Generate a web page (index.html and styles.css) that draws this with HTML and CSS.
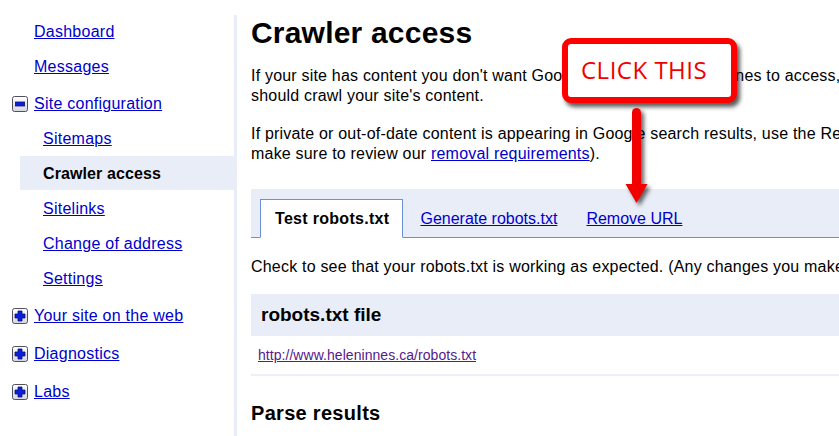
FILE: index.html
```html
<!DOCTYPE html>
<html lang="en">
<head>
<meta charset="utf-8">
<title>Crawler access</title>
<link rel="stylesheet" href="styles.css">
</head>
<body>
<div class="page">
  <nav class="sidebar">
    <ul class="nav">
      <li class="nav-item"><a href="#">Dashboard</a></li>
      <li class="nav-item"><a href="#">Messages</a></li>
      <li class="nav-item nav-parent">
        <svg class="toggle" viewBox="0 0 16 16" width="16" height="16" aria-hidden="true">
          <defs><linearGradient id="g1" x1="0" y1="0" x2="0" y2="1"><stop offset="0" stop-color="#ffffff"/><stop offset="1" stop-color="#d4d6e0"/></linearGradient></defs>
          <rect x="0.5" y="0.5" width="15" height="15" rx="2" fill="url(#g1)" stroke="#50505e"/>
          <rect x="3.4" y="6" width="9.2" height="4" fill="#0a1ee0" stroke="#101070" stroke-width="0.8"/>
        </svg>
        <a href="#">Site configuration</a>
      </li>
      <li>
        <ul class="subnav">
          <li class="nav-item"><a href="#">Sitemaps</a></li>
          <li class="nav-item active">Crawler access</li>
          <li class="nav-item"><a href="#">Sitelinks</a></li>
          <li class="nav-item"><a href="#">Change of address</a></li>
          <li class="nav-item"><a href="#">Settings</a></li>
        </ul>
      </li>
      <li class="nav-item nav-parent collapsed">
        <svg class="toggle" viewBox="0 0 16 16" width="16" height="16" aria-hidden="true">
          <defs><linearGradient id="g2" x1="0" y1="0" x2="0" y2="1"><stop offset="0" stop-color="#ffffff"/><stop offset="1" stop-color="#d4d6e0"/></linearGradient></defs>
          <rect x="0.5" y="0.5" width="15" height="15" rx="2" fill="url(#g2)" stroke="#50505e"/>
          <path d="M6 3h4v3h3v4h-3v3h-4v-3h-3v-4h3z" fill="#0a1ee0" stroke="#101070" stroke-width="0.8"/>
        </svg>
        <a href="#">Your site on the web</a>
      </li>
      <li class="nav-item nav-parent collapsed">
        <svg class="toggle" viewBox="0 0 16 16" width="16" height="16" aria-hidden="true">
          <defs><linearGradient id="g3" x1="0" y1="0" x2="0" y2="1"><stop offset="0" stop-color="#ffffff"/><stop offset="1" stop-color="#d4d6e0"/></linearGradient></defs>
          <rect x="0.5" y="0.5" width="15" height="15" rx="2" fill="url(#g3)" stroke="#50505e"/>
          <path d="M6 3h4v3h3v4h-3v3h-4v-3h-3v-4h3z" fill="#0a1ee0" stroke="#101070" stroke-width="0.8"/>
        </svg>
        <a href="#">Diagnostics</a>
      </li>
      <li class="nav-item nav-parent collapsed">
        <svg class="toggle" viewBox="0 0 16 16" width="16" height="16" aria-hidden="true">
          <defs><linearGradient id="g4" x1="0" y1="0" x2="0" y2="1"><stop offset="0" stop-color="#ffffff"/><stop offset="1" stop-color="#d4d6e0"/></linearGradient></defs>
          <rect x="0.5" y="0.5" width="15" height="15" rx="2" fill="url(#g4)" stroke="#50505e"/>
          <path d="M6 3h4v3h3v4h-3v3h-4v-3h-3v-4h3z" fill="#0a1ee0" stroke="#101070" stroke-width="0.8"/>
        </svg>
        <a href="#">Labs</a>
      </li>
    </ul>
  </nav>

  <main class="main">
    <h1 class="title">Crawler access</h1>
    <p class="intro intro-first">If your site has content you don't want Google or other search engines to access, use a robots.txt file to specify how search engines<br>should crawl your site's content.</p>
    <p class="intro intro-second">If private or out-of-date content is appearing in Google search results, use the Remove URL tool to request its removal. (Before you submit a request,<br>make sure to review our <a href="#">removal requirements</a>).</p>

    <div class="tabs">
      <span class="tab tab-active">Test robots.txt</span>
      <a class="tab-link" href="#">Generate robots.txt</a>
      <a class="tab-link" href="#">Remove URL</a>
    </div>

    <p class="check">Check to see that your robots.txt is working as expected. (Any changes you make to this robots.txt content will not be saved.)</p>

    <section class="file-box">
      <h2 class="file-title">robots.txt file</h2>
      <div class="file-url"><a class="visited" href="#">http://www.heleninnes.ca/robots.txt</a></div>
    </section>

    <h2 class="parse-title">Parse results</h2>
  </main>

  <div class="callout">CLICK THIS</div>
  <svg class="arrow" viewBox="0 0 36 104" width="36" height="104" aria-hidden="true">
    <rect x="12" y="4" width="9" height="82" rx="4.5" fill="#f20000"/>
    <polygon points="5.5,80 27.5,80 16.5,99" fill="#f20000"/>
  </svg>
</div>
</body>
</html>
```

FILE: styles.css
```css
html, body {
  margin: 0;
  padding: 0;
  overflow: hidden;
  background: #ffffff;
}

body {
  font-family: "Liberation Sans", Arial, sans-serif;
  font-size: 16px;
  color: #000000;
}

a {
  color: #0000cc;
  text-decoration: underline;
}

.page {
  display: flex;
  min-height: 100vh;
  position: relative;
}

/* Sidebar */
.sidebar {
  flex: none;
  width: 234px;
  margin-top: 15px;
  border-right: 3px solid #e8edf8;
  letter-spacing: 0.25px;
}

.nav {
  list-style: none;
  margin: -1px 0 0 0;
  padding: 0;
}

.subnav {
  list-style: none;
  margin: 0 0 0 20px;
  padding: 0;
}

.nav-item {
  height: 35px;
  line-height: 35px;
  padding-left: 34px;
  white-space: nowrap;
}

.subnav .nav-item {
  padding-left: 23px;
}

.nav-item.active {
  background: #e8edf8;
  font-weight: bold;
  letter-spacing: 0.1px;
  height: 34px;
  margin-bottom: 1px;
  line-height: 35px;
}

.nav-parent {
  display: flex;
  align-items: center;
  gap: 6px;
  padding-left: 12px;
  margin-top: 2px;
}

.nav-parent.collapsed + .nav-parent.collapsed {
  margin-top: 3px;
}

.toggle {
  flex: none;
  display: block;
}

/* Main */
.main {
  flex: none;
  width: 1000px;
  padding-left: 14px;
}

.title {
  font-size: 30px;
  font-weight: bold;
  letter-spacing: 0.2px;
  line-height: 34px;
  margin: 16px 0 16px 0;
}

.intro {
  margin: 0;
  line-height: 19.5px;
  letter-spacing: 0.2px;
  white-space: nowrap;
}

.intro-first {
  margin-bottom: 19px;
}

.intro-second {
  margin-bottom: 26px;
}

.tabs {
  display: flex;
  align-items: flex-end;
  background: #e8edf8;
  padding: 10px 0 0 9px;
  border-bottom: 1px solid #6b90da;
}

.tab {
  display: block;
  line-height: 37px;
  padding: 0 13px 0 14px;
  background: #ffffff;
  border: 1px solid #6b90da;
  border-bottom-color: #ffffff;
  margin-bottom: -1px;
  font-weight: bold;
  letter-spacing: 0.3px;
  white-space: nowrap;
}

.tab-link {
  display: block;
  line-height: 37px;
  margin-left: 17px;
  white-space: nowrap;
}

.tab-link + .tab-link {
  margin-left: 29px;
}

.check {
  margin: 19px 0 17px 0;
  line-height: 19.5px;
  letter-spacing: 0.2px;
  white-space: nowrap;
}

.file-box {
  border-bottom: 2px solid #eceefa;
}

.file-title {
  margin: 0;
  height: 42px;
  line-height: 42px;
  font-size: 19px;
  font-weight: bold;
  background: #e8edf8;
  padding-left: 10px;
}

.file-url {
  height: 38px;
  line-height: 38px;
  font-size: 14px;
  letter-spacing: 0.05px;
  padding-left: 7px;
}

.visited {
  color: #551a8b;
}

.parse-title {
  margin: 26px 0 0 0;
  font-size: 20px;
  font-weight: bold;
  letter-spacing: 0.3px;
  line-height: 23px;
}

/* Annotation overlay */
.callout {
  position: absolute;
  left: 562px;
  top: 38px;
  width: 175px;
  height: 65px;
  box-sizing: border-box;
  border: 6px solid #ff0000;
  border-radius: 9px;
  background: #ffffff;
  box-shadow: 3px 4px 4px rgba(0, 0, 0, 0.65);
  padding: 0 0 3px 13px;
  display: flex;
  align-items: center;
  font-family: "Open Sans", "Noto Sans", sans-serif;
  font-size: 24px;
  letter-spacing: 0.5px;
  color: #f00000;
  white-space: nowrap;
}

.arrow {
  position: absolute;
  left: 620px;
  top: 104px;
  filter: drop-shadow(3px 3px 2px rgba(0, 0, 0, 0.6));
}
```
